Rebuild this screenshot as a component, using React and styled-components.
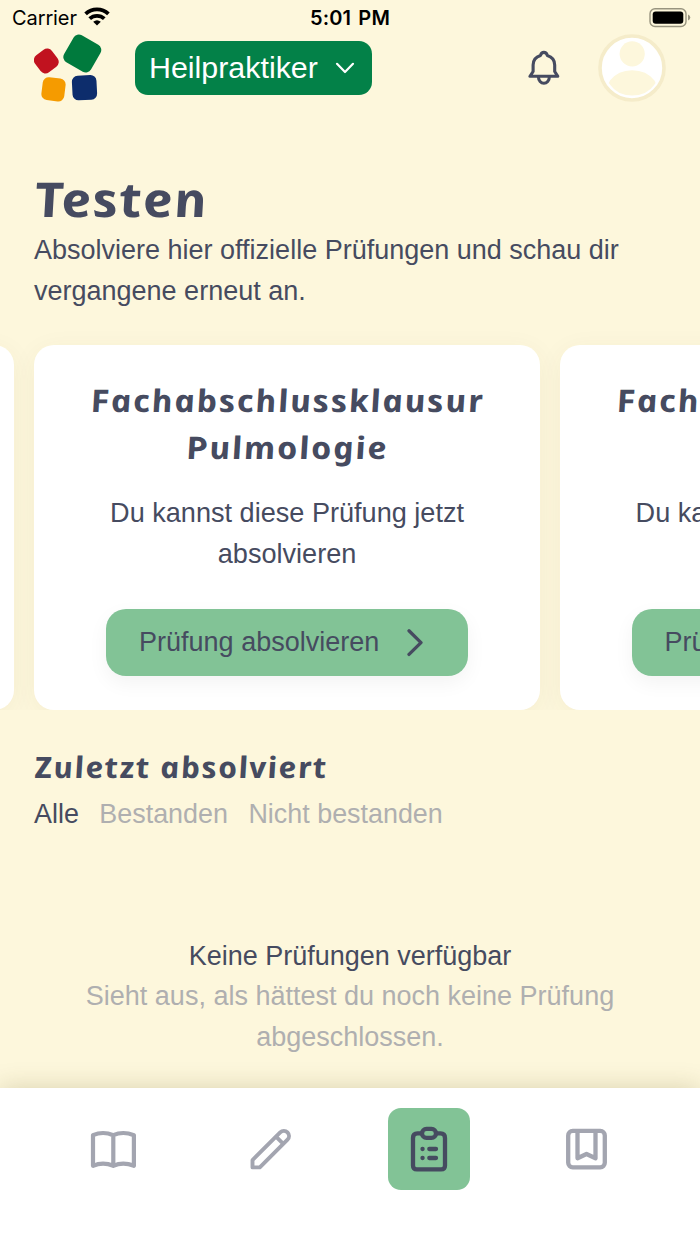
import React, {useState} from "react";
import styled, {createGlobalStyle} from "styled-components";

const GlobalStyle = createGlobalStyle`
  *{box-sizing: border-box;}
  body{margin: 0; background: #fdf7dc; overflow: hidden;}
  button{font: inherit; color: inherit; border: 0; padding: 0; background: none;}
  svg{display: block; flex: none;}
`;

const Screen = styled.div`width: 700px; height: 1244px; display: flex; flex-direction: column; overflow: hidden;
  background: #fdf7dc; color: #464b60; font: 27px/40.5px "Liberation Sans", Arial, sans-serif;`;
const StatusBar = styled.div`height: 35px; padding: 0 9px 0 12px; display: grid; grid-template-columns: 1fr auto 1fr;
  align-items: center; color: #000; font: 20px/35px Inter, sans-serif;`;
const Carrier = styled.div`display: flex; align-items: center; gap: 7px; letter-spacing: -0.1px; padding-top: 1px;
  svg{margin-bottom: 4px;}`;
const Time = styled.div`font-weight: 600; padding: 1px 3px 0 0; word-spacing: 2px; letter-spacing: 0.15px;`;
const Battery = styled.div`display: flex; justify-content: flex-end;`;

const Header = styled.header`height: 66px; padding: 0 34px; display: flex; align-items: center;`;
const CourseSelect = styled.button`&&{width: 237px; height: 54px; margin-left: 33px; padding: 0 17px 0 14px; border-radius: 13px;
  background: #038148; color: #fff; font-size: 30.4px; display: flex; align-items: center; justify-content: space-between;}`;
const CourseName = styled.span`padding-bottom: 2px;`;
const HeaderActions = styled.div`margin-left: auto; display: flex; align-items: center; gap: 38px;`;

const Intro = styled.section`padding: 70px 34px 0;`;
const Heading = styled.h2`margin: 0; font-family: "Noto Sans", sans-serif; font-style: italic; font-weight: 700;
  font-size: ${({$size})=>$size}px; line-height: ${({$line})=>$line}px; letter-spacing: ${({$spacing})=>$spacing}px;`;
/* widens the letters and takes most of the italic slant out, line by line */
const Line = styled.span`display: block; width: fit-content; margin: ${({$center})=>($center?'0 auto': '0')};
  transform: scaleX(${({$stretch})=>$stretch}) skewX(9deg); transform-origin: ${({$center})=>($center?'center': 'left')};`;
const Text = styled.p`margin: 0; color: ${({$muted})=>($muted?'#afafb0': 'inherit')};`;
const IntroText = styled(Text)`margin-top: 3px;`;

const Slider = styled.div`height: 395px; margin-top: 4px; padding-top: 30px; overflow: hidden; display: flex; gap: 20px;`;
const ExamCard = styled.article`flex: none; width: 505.5px; height: 365px; padding: 32px 40px 34px; border-radius: 20px;
  background: #fff; box-shadow: 0 5px 27px rgba(90, 80, 0, 0.055); text-align: center; display: flex; flex-direction: column;
  align-items: center;
  &:first-child{margin-left: -491.2px;}`;
const CardText = styled(Text)`width: 400px; margin-top: 22px; font-size: 27.1px;`;
const ExamButton = styled.button`&&{width: 362px; height: 67px; margin-top: auto; padding: 0 44px 0 33px; border-radius: 20px;
  background: #82c396; display: flex; align-items: center; justify-content: space-between;
  box-shadow: 0 7px 20px rgba(0, 0, 0, 0.05);}`;

const Recent = styled.section`flex: 1; padding: 33px 34px 0;`;
const Filters = styled.div`display: flex; gap: 20.5px; margin-top: 4px;`;
const Filter = styled.button`&&{font-size: 26.9px; color: ${({$active})=>($active?'#464b60': '#afafb0')};}`;
const Empty = styled.div`margin-top: 101px; text-align: center;`;

const TabBar = styled.nav`height: 156px; padding: 20px 34.6px 0; background: #fff; display: grid;
  grid-template-columns: repeat(4, 1fr); justify-items: center; align-items: start; box-shadow: 0 0 24px rgba(90, 80, 20, 0.22);`;
const Tab = styled.button`&&{width: 81.5px; height: 81.5px; border-radius: 13px; display: flex; align-items: center;
  justify-content: center; background: ${({$active})=>($active?'#82c396': 'transparent')};
  color: ${({$active})=>($active?'#464b60': '#a3a5b0')};}`;

const WifiIcon = ()=>(
	<svg width="26" height="19" viewBox="0 0 26 19" fill="none" stroke="#000" strokeWidth="3.8">
		<path d="M1.6 6.9A16.5 16.5 0 0 1 24.4 6.9"/>
		<path d="M5.7 11.7A10.6 10.6 0 0 1 20.3 11.7"/>
		<path d="M13 18.5L9.2 14.7Q13 11.6 16.8 14.7Z" fill="#000" stroke="none"/>
	</svg>
);

const BatteryIcon = ()=>(
	<svg width="42" height="20" viewBox="0 0 42 20">
		<rect x="1" y="0.7" width="36" height="17.8" rx="5" fill="none" stroke="#98947f" strokeWidth="1.4"/>
		<rect x="3.7" y="3.4" width="30.6" height="12.3" rx="3" fill="#000"/>
		<path d="M39 6.5Q41.3 7.5 41.3 9.5T39 12.5Z" fill="#98947f"/>
	</svg>
);

const Logo = ()=>(
	<svg width="68" height="68" viewBox="34 34 68 68">
		<rect x="35.7" y="50.4" width="21.2" height="21.2" rx="6" fill="#c1121f" transform="rotate(-37 46.3 61)"/>
		<rect x="66.8" y="38" width="31" height="31" rx="6" fill="#007a3d" transform="rotate(30 82.3 53.5)"/>
		<rect x="42" y="77.8" width="23" height="23" rx="6" fill="#f59b00" transform="rotate(7 53.5 89.3)"/>
		<rect x="72.2" y="75.4" width="24.6" height="24.6" rx="6" fill="#0d2d6c" transform="rotate(-3 84.5 87.7)"/>
	</svg>
);

const BellIcon = ()=>(
	<svg width="32" height="36" viewBox="528.5 50 32 36" fill="none" stroke="#464b60" strokeWidth="3.1" strokeLinecap="round" strokeLinejoin="round">
		<path d="M530.5 76.3H558.3L555.2 71.5V65Q555.2 57.6 547.8 55.4Q546.9 52.4 544.4 52.4T541 55.4Q533.6 57.6 533.6 65V71.5Z"/>
		<path d="M539 77.3A5.4 5.9 0 0 0 549.8 77.3"/>
	</svg>
);

const Avatar = ()=>(
	<svg width="68" height="68" viewBox="598 33.5 68 68">
		<circle cx="632" cy="67.5" r="32" fill="#fff" stroke="#f5ecca" strokeWidth="3.6"/>
		<circle cx="632.2" cy="53.3" r="12.6" fill="#fdf7dc"/>
		<path d="M610 80Q618 69.7 632.2 69.7T654.5 80Q656.2 82 654.5 84Q647 95 632.2 95T610 84Q608.2 82 610 80Z" fill="#fdf7dc"/>
	</svg>
);

const ChevronDown = ()=>(
	<svg width="20" height="12" viewBox="0 0 20 12" fill="none" stroke="#fff" strokeWidth="2.2" strokeLinecap="round" strokeLinejoin="round">
		<path d="M2 1.8L10 10L18 1.8"/>
	</svg>
);

const ChevronRight = ()=>(
	<svg width="18" height="28" viewBox="0 0 18 28" fill="none" stroke="#464b60" strokeWidth="3.3" strokeLinecap="round" strokeLinejoin="round">
		<path d="M3 1.8L15 13.6L3 25.4"/>
	</svg>
);

const BookIcon = ()=>(
	<svg width="46" height="38" viewBox="0 0 46 38" fill="none" stroke="currentColor" strokeWidth="4.2" strokeLinecap="round" strokeLinejoin="round">
		<path d="M23.3 5.2Q13 0.8 3 5.2V35.8Q13 31.4 23.3 35.8Q33 31.4 43.9 35.8V5.2Q33 0.8 23.3 5.2V35.8"/>
	</svg>
);

const PencilIcon = ()=>(
	<svg width="42" height="42" viewBox="0 0 42 42" fill="none" stroke="currentColor" strokeWidth="3.9" strokeLinejoin="round">
		<path d="M2.5 39.4V32.1L30.2 4.4A4.8 4.8 0 0 1 37.5 11.7L9.8 39.4Z"/>
		<path d="M26 8.6L33.3 15.9"/>
	</svg>
);

const ClipboardIcon = ()=>(
	<svg width="38" height="46" viewBox="0 0 38 46" fill="none" stroke="currentColor" strokeWidth="4.3" strokeLinecap="round" strokeLinejoin="round">
		<path d="M11.5 7.4H7.5Q3 7.4 3 11.9V39.4Q3 43.4 7 43.4H31Q35 43.4 35 39.4V11.9Q35 7.4 30.5 7.4H26.5"/>
		<rect x="12" y="2.9" width="14" height="9" rx="4.5"/>
		<path d="M12.5 23H12.6M19.3 23H26M12.5 32H12.6M19.3 32H26"/>
	</svg>
);

const BookmarkIcon = ()=>(
	<svg width="42" height="42" viewBox="0 0 42 42" fill="none" stroke="currentColor" strokeWidth="4.3" strokeLinejoin="round">
		<rect x="2.2" y="2.9" width="36.6" height="36.4" rx="4.5"/>
		<path d="M11.5 3V30.3L20.5 26L29.5 30.3V3"/>
	</svg>
);

const exams = ["Pulmologie", "Neurologie"];
const filters = ["Alle", "Bestanden", "Nicht bestanden"];
const tabs = [BookIcon, PencilIcon, ClipboardIcon, BookmarkIcon];

export default function App(){
	const [filter, setFilter] = useState("Alle");
	const [tab, setTab] = useState(2);
	return(
		<Screen>
			<GlobalStyle/>
			<StatusBar>
				<Carrier>Carrier<WifiIcon/></Carrier>
				<Time>5:01 PM</Time>
				<Battery><BatteryIcon/></Battery>
			</StatusBar>
			<Header>
				<Logo/>
				<CourseSelect><CourseName>Heilpraktiker</CourseName><ChevronDown/></CourseSelect>
				<HeaderActions>
					<BellIcon/>
					<Avatar/>
				</HeaderActions>
			</Header>
			<Intro>
				<Heading as="h1" $size={48} $line={56} $spacing={1}><Line $stretch={1.13}>Testen</Line></Heading>
				<IntroText>Absolviere hier offizielle Prüfungen und schau dir vergangene erneut an.</IntroText>
			</Intro>
			<Slider>
				<ExamCard/>
				{exams.map((exam)=>(
					<ExamCard key={exam}>
						<Heading $size={31} $line={47} $spacing={1.4}>
							<Line $center $stretch={1.125}>Fachabschlussklausur</Line>
							<Line $center $stretch={1.125}>{exam}</Line>
						</Heading>
						<CardText>Du kannst diese Prüfung jetzt absolvieren</CardText>
						<ExamButton>Prüfung absolvieren<ChevronRight/></ExamButton>
					</ExamCard>
				))}
			</Slider>
			<Recent>
				<Heading $size={29.5} $line={47} $spacing={1.2}><Line $stretch={1.1}>Zuletzt absolviert</Line></Heading>
				<Filters>
					{filters.map((item)=>(
						<Filter key={item} $active={item===filter} onClick={()=>setFilter(item)}>{item}</Filter>
					))}
				</Filters>
				<Empty>
					<Text>Keine Prüfungen verfügbar</Text>
					<Text $muted>Sieht aus, als hättest du noch keine Prüfung abgeschlossen.</Text>
				</Empty>
			</Recent>
			<TabBar>
				{tabs.map((Icon, index)=>(
					<Tab key={index} $active={index===tab} onClick={()=>setTab(index)}><Icon/></Tab>
				))}
			</TabBar>
		</Screen>
	);
}
